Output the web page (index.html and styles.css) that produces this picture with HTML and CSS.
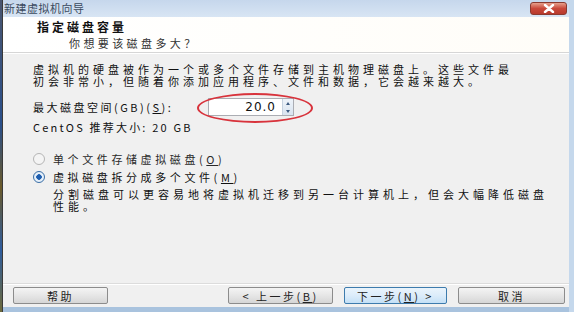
FILE: index.html
```html
<!DOCTYPE html>
<html lang="zh-CN">
<head>
    <meta charset="UTF-8">
    <meta name="viewport" content="width=device-width, initial-scale=1.0">
    <title>新建虚拟机向导</title>
    <link rel="stylesheet" href="styles.css">
</head>
<body>
    <div class="desktop">
        <div class="edge"></div>
        <div class="window">
            <div class="titlebar">
                <span class="title">新建虚拟机向导</span>
                <span class="close">
                    <svg width="16" height="9" viewBox="0 0 16 9">
                        <path d="M4 1 L12 8 M12 1 L4 8" stroke="#fff" stroke-width="2.4" stroke-linecap="round"/>
                    </svg>
                </span>
            </div>

            <div class="header">
                <div class="heading">指定磁盘容量</div>
                <div class="subheading">你想要该磁盘多大？</div>
            </div>

            <div class="content">
                <p class="intro">
                    <span class="line">虚拟机的硬盘被作为一个或多个文件存储到主机物理磁盘上。这些文件最</span>
                    <span class="line">初会非常小，但随着你添加应用程序、文件和数据，它会越来越大。</span>
                </p>

                <div class="size-row">
                    <span class="label">最大磁盘空间(GB)(<u>S</u>):</span>
                    <div class="spin">
                        <span class="value">20.0</span>
                        <span class="arrows">
                            <i class="up"></i>
                            <i class="down"></i>
                        </span>
                    </div>
                    <span class="mark"></span>
                </div>

                <p class="recommend">CentOS 推荐大小: 20 GB</p>

                <div class="option disabled">
                    <span class="radio"></span>
                    <span>单个文件存储虚拟磁盘(<u>O</u>)</span>
                </div>
                <div class="option">
                    <span class="radio checked"></span>
                    <span>虚拟磁盘拆分成多个文件(<u>M</u>)</span>
                </div>
                <p class="desc">
                    <span class="line">分割磁盘可以更容易地将虚拟机迁移到另一台计算机上，但会大幅降低磁盘</span>
                    <span class="line">性能。</span>
                </p>
            </div>

            <div class="footer">
                <button class="btn help">帮助</button>
                <div class="nav">
                    <button class="btn back">&lt; 上一步(<u>B</u>)</button>
                    <button class="btn next">下一步(<u>N</u>) &gt;</button>
                    <button class="btn cancel">取消</button>
                </div>
            </div>
            <div class="frame-bottom"></div>
        </div>
    </div>
</body>
</html>
```

FILE: styles.css
```css
*{
    box-sizing: border-box;
}
body{
    margin: 0;
    width: 574px;
    height: 312px;
    overflow: hidden;
    font-family: "Noto Sans CJK SC", "DejaVu Sans", sans-serif;
    font-size: 11px;
    color: #111;
}
p{
    margin: 0;
}
u{
    text-decoration: underline;
}
.line{
    display: block;
    height: 12px;
    line-height: 12px;
}
.desktop{
    display: flex;
    height: 312px;
    background: #2d3a52;
}
.edge{
    width: 2px;
    background: linear-gradient(#4a5670, #2a4f8a 40%, #6b5a2a 60%, #2e5c9e 80%, #6e6a3a);
}
.window{
    flex: 1;
    display: flex;
    flex-direction: column;
    border-left: 1px solid #3a3a3a;
    border-right: 5px solid #c5d8ec;
    background: #f0f0f0;
}
.titlebar{
    height: 17px;
    display: flex;
    align-items: center;
    justify-content: space-between;
    padding: 0 2px 0 1px;
    background: linear-gradient(#c6d7ec, #d8e5f4);
}
.title{
    font-size: 11px;
    line-height: 17px;
    color: #3a4a5e;
    letter-spacing: 0.5px;
}
.close{
    width: 37px;
    height: 13px;
    display: flex;
    align-items: center;
    justify-content: center;
    border-radius: 3px;
    border: 1px solid #8a3a30;
    background: linear-gradient(#e7a08c, #c9483a 50%, #b83a2c);
}
.header{
    height: 36px;
    background: linear-gradient(90deg, #ffffff, #fffdf8);
    border-bottom: 1px solid #d6d6d6;
    padding: 3px 0 0 34px;
}
.heading{
    font-size: 12px;
    font-weight: bold;
    line-height: 14px;
    letter-spacing: 3px;
}
.subheading{
    line-height: 14px;
    margin: 2px 0 0 32px;
    letter-spacing: 3.4px;
    color: #333;
}
.content{
    flex: 1;
    padding: 9px 0 0 30px;
    border-top: 1px solid #fff;
}
.intro{
    letter-spacing: 4px;
}
.size-row{
    position: relative;
    display: flex;
    align-items: center;
    margin-top: 11px;
    height: 18px;
}
.label{
    width: 175px;
    letter-spacing: 2.5px;
}
.spin{
    display: flex;
    width: 86px;
    height: 18px;
    border: 1px solid #abadb3;
    background: #fff;
}
.value{
    flex: 1;
    text-align: right;
    padding-right: 6px;
    line-height: 16px;
    font-family: "DejaVu Sans", sans-serif;
    font-size: 12px;
    letter-spacing: 1px;
}
.arrows{
    width: 11px;
    display: flex;
    flex-direction: column;
    border-left: 1px solid #c6d2e0;
    background: linear-gradient(#eef3f9, #d9e4f0);
}
.arrows i{
    flex: 1;
    display: flex;
    align-items: center;
    justify-content: center;
}
.arrows i::after{
    content: "";
    border-left: 2.5px solid transparent;
    border-right: 2.5px solid transparent;
}
.arrows .up::after{
    border-bottom: 3px solid #3c5a80;
}
.arrows .down::after{
    border-top: 3px solid #3c5a80;
}
.mark{
    position: absolute;
    left: 164px;
    top: -5px;
    width: 116px;
    height: 30px;
    border: 2px solid #d8333c;
    border-radius: 50%;
}
.recommend{
    margin-top: 5px;
    height: 12px;
    line-height: 12px;
    letter-spacing: 2.2px;
}
.option{
    display: flex;
    align-items: center;
    gap: 8px;
    height: 12px;
    line-height: 12px;
    margin-top: 20px;
    letter-spacing: 3.6px;
}
.option + .option{
    margin-top: 6px;
}
.option.disabled{
    color: #2a2a2a;
}
.radio{
    width: 12px;
    height: 12px;
    flex-shrink: 0;
    border-radius: 50%;
    border: 1px solid #b5b5b5;
    background: #f4f4f4;
}
.radio.checked{
    border-color: #3a6ea5;
    background: radial-gradient(circle, #1f5fb0 0 2.5px, #e6f0fa 3px);
}
.desc{
    margin-top: 5px;
    padding-left: 20px;
    letter-spacing: 4px;
}
.footer{
    height: 24px;
    display: flex;
    align-items: center;
    justify-content: space-between;
    padding: 0 4px 1px 10px;
    border-top: 1px solid #dcdcdc;
    box-shadow: inset 0 1px 0 #fff;
}
.nav{
    display: flex;
    gap: 11px;
}
.btn{
    height: 17px;
    padding: 0;
    font-family: inherit;
    font-size: 11px;
    letter-spacing: 2.5px;
    color: #222;
    border: 1px solid #8c8c8c;
    border-radius: 2px;
    background: linear-gradient(#f4f4f4, #e6e6e6 50%, #d6d6d6);
}
.help{
    width: 95px;
}
.back{
    width: 105px;
}
.next{
    width: 103px;
    border-color: #3d7bad;
    background: linear-gradient(#eaf4fc, #dcecfa 50%, #c4e0f6);
}
.cancel{
    width: 107px;
}
.frame-bottom{
    height: 5px;
    background: #a9c3de;
}
```
